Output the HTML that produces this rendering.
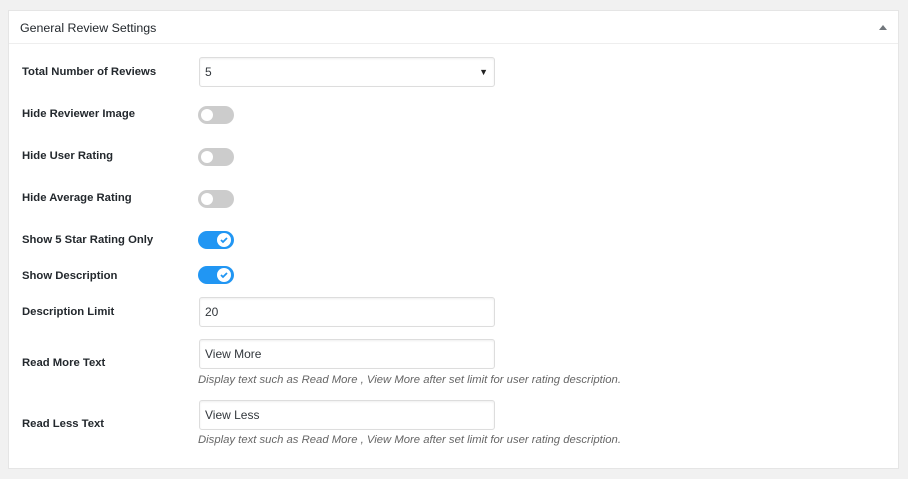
<!DOCTYPE html><html><head><style>
body{margin:0;background:#f1f1f1;width:908px;height:479px;position:relative;font-family:"Liberation Sans",sans-serif;overflow:hidden}
.p{position:absolute;left:8px;top:10px;width:889px;height:457px;background:#fff;border:1px solid #e5e5e5}
.h{position:absolute;left:0;top:0;right:0;height:32px;border-bottom:1px solid #eee;font-size:12.4px;color:#23282d;line-height:34px;padding-left:11px}
.a{position:absolute;right:11px;top:14px;width:0;height:0;border-left:4px solid transparent;border-right:4px solid transparent;border-bottom:5px solid #72777c}
.l{position:absolute;left:22px;font-size:11.3px;font-weight:bold;color:#23282d;margin-top:1px}
.i{position:absolute;left:199px;width:296px;height:30px;box-sizing:border-box;border:1px solid #ddd;border-radius:3px;font-size:12px;color:#32373c;line-height:28px;padding-left:5px;box-shadow:inset 0 1px 2px rgba(0,0,0,.07)}
.t{position:absolute;left:198px;width:36px;height:18px;border-radius:9px;background:#ccc}
.t:after{content:"";position:absolute;left:3px;top:3px;width:12px;height:12px;border-radius:50%;background:#fff}
.t.on{background:#2196f3}
.t.on:after{left:19px;width:14px;height:14px;top:2px}
.t.on svg{position:absolute;left:21px;top:4px;z-index:2}
.d{position:absolute;left:198px;font-size:11.3px;font-style:italic;color:#666;margin-top:1px}
</style></head><body>
<div class="p"><div class="h">General Review Settings<div class="a"></div></div></div>
<div class="l" style="top:65px">Total Number of Reviews</div>
<div class="i" style="top:57px">5<span style="position:absolute;right:6px;font-size:9px;color:#222">▼</span></div>
<div class="l" style="top:107px">Hide Reviewer Image</div><div class="t" style="top:106px"></div>
<div class="l" style="top:149px">Hide User Rating</div><div class="t" style="top:148px"></div>
<div class="l" style="top:191px">Hide Average Rating</div><div class="t" style="top:190px"></div>
<div class="l" style="top:233px">Show 5 Star Rating Only</div><div class="t on" style="top:231px"><svg width="10" height="10" viewBox="0 0 10 10"><path d="M2 5l2 2 4-4" stroke="#2196f3" stroke-width="1.8" fill="none"/></svg></div>
<div class="l" style="top:269px">Show Description</div><div class="t on" style="top:266px"><svg width="10" height="10" viewBox="0 0 10 10"><path d="M2 5l2 2 4-4" stroke="#2196f3" stroke-width="1.8" fill="none"/></svg></div>
<div class="l" style="top:305px">Description Limit</div><div class="i" style="top:297px">20</div>
<div class="l" style="top:356px">Read More Text</div><div class="i" style="top:339px">View More</div>
<div class="d" style="top:373px">Display text such as Read More , View More after set limit for user rating description.</div>
<div class="l" style="top:417px">Read Less Text</div><div class="i" style="top:400px">View Less</div>
<div class="d" style="top:433px">Display text such as Read More , View More after set limit for user rating description.</div>
</body></html>
